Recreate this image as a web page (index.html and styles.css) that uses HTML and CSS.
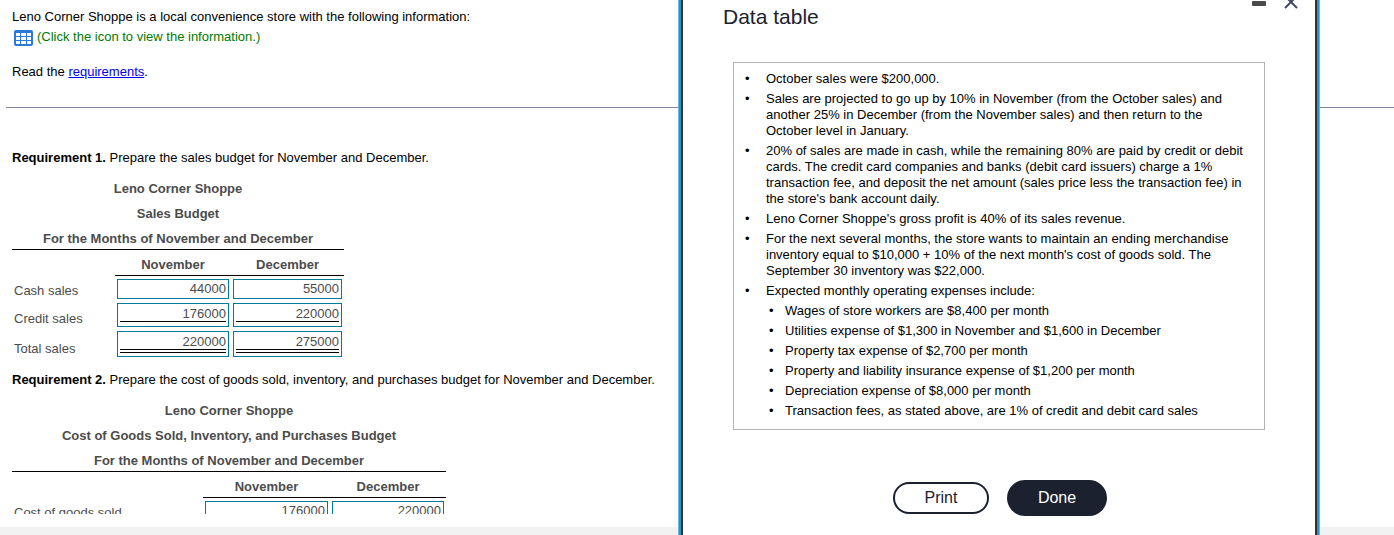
FILE: index.html
```html
<!DOCTYPE html>
<html lang="en">
<head>
  <meta charset="UTF-8">
  <meta name="viewport" content="width=device-width, initial-scale=1.0">
  <title>Leno Corner Shoppe</title>
  <link rel="stylesheet" href="styles.css">
</head>
<body>
  <main class="question">
    <div class="scroll">
      <section class="intro">
        <p>Leno Corner Shoppe is a local convenience store with the following information:</p>
        <p class="hint">
          <svg class="table-icon" width="19" height="16" viewBox="0 0 19 16" aria-hidden="true">
            <rect x="0" y="0" width="19" height="16" rx="2" fill="#2b78d8"/>
            <g fill="#fff">
              <rect x="2" y="3" width="4" height="3"/>
              <rect x="7" y="3" width="5" height="3"/>
              <rect x="13" y="3" width="4" height="3"/>
              <rect x="2" y="7" width="4" height="3"/>
              <rect x="7" y="7" width="5" height="3"/>
              <rect x="13" y="7" width="4" height="3"/>
              <rect x="2" y="11" width="4" height="3"/>
              <rect x="7" y="11" width="5" height="3"/>
              <rect x="13" y="11" width="4" height="3"/>
            </g>
          </svg>
          <span>(Click the icon to view the information.)</span>
        </p>
        <p class="read">Read the <a href="#requirements">requirements</a>.</p>
      </section>
      <hr class="divider">
      <section class="answers" id="requirements">
        <p><b>Requirement 1.</b> Prepare the sales budget for November and December.</p>
        <table class="budget">
          <colgroup>
            <col class="col-103">
            <col class="col-116">
            <col class="col-113">
          </colgroup>
          <thead>
            <tr class="title"><th colspan="3">Leno Corner Shoppe</th></tr>
            <tr class="title"><th colspan="3">Sales Budget</th></tr>
            <tr class="title ruled"><th colspan="3">For the Months of November and December</th></tr>
            <tr class="months">
              <td></td>
              <th>November</th>
              <th>December</th>
            </tr>
          </thead>
          <tbody>
            <tr>
              <th class="label">Cash sales</th>
              <td><div class="box"><input type="text" value="44000" aria-label="Cash sales, November"></div></td>
              <td><div class="box"><input type="text" value="55000" aria-label="Cash sales, December"></div></td>
            </tr>
            <tr>
              <th class="label">Credit sales</th>
              <td><div class="box subtotal"><input type="text" value="176000" aria-label="Credit sales, November"></div></td>
              <td><div class="box subtotal"><input type="text" value="220000" aria-label="Credit sales, December"></div></td>
            </tr>
            <tr>
              <th class="label">Total sales</th>
              <td><div class="box total"><input type="text" value="220000" aria-label="Total sales, November"></div></td>
              <td><div class="box total"><input type="text" value="275000" aria-label="Total sales, December"></div></td>
            </tr>
          </tbody>
        </table>
        <p><b>Requirement 2.</b> Prepare the cost of goods sold, inventory, and purchases budget for November and December.</p>
        <table class="budget">
          <colgroup>
            <col class="col-191">
            <col class="col-127">
            <col class="col-116">
          </colgroup>
          <thead>
            <tr class="title"><th colspan="3">Leno Corner Shoppe</th></tr>
            <tr class="title"><th colspan="3">Cost of Goods Sold, Inventory, and Purchases Budget</th></tr>
            <tr class="title ruled"><th colspan="3">For the Months of November and December</th></tr>
            <tr class="months">
              <td></td>
              <th>November</th>
              <th>December</th>
            </tr>
          </thead>
          <tbody>
            <tr>
              <th class="label">Cost of goods sold</th>
              <td><div class="box"><input type="text" value="176000" aria-label="Cost of goods sold, November"></div></td>
              <td><div class="box"><input type="text" value="220000" aria-label="Cost of goods sold, December"></div></td>
            </tr>
          </tbody>
        </table>
      </section>
    </div>
  </main>

  <div class="dialog" role="dialog" aria-labelledby="dialog-title">
    <header class="dialog-header">
      <h1 id="dialog-title">Data table</h1>
      <div class="window-buttons">
        <button type="button" aria-label="Minimize">
          <svg width="14" height="12" viewBox="0 0 14 12"><rect x="0" y="1" width="14" height="5" rx="1" fill="#4a4a4a"/></svg>
        </button>
        <button type="button" aria-label="Close">
          <svg width="14" height="12" viewBox="0 0 14 12"><path d="M1 -4L13 8M13 -4L1 8" stroke="#414a5c" stroke-width="2" fill="none"/></svg>
        </button>
      </div>
    </header>
    <div class="data">
      <ul class="facts">
        <li><span>October sales were $200,000.</span></li>
        <li><span>Sales are projected to go up by 10% in November (from the October sales) and another 25% in December (from the November sales) and then return to the October level in January.</span></li>
        <li><span>20% of sales are made in cash, while the remaining 80% are paid by credit or debit cards. The credit card companies and banks (debit card issuers) charge a 1% transaction fee, and deposit the net amount (sales price less the transaction fee) in the store's bank account daily.</span></li>
        <li><span>Leno Corner Shoppe's gross profit is 40% of its sales revenue.</span></li>
        <li><span>For the next several months, the store wants to maintain an ending merchandise inventory equal to $10,000 + 10% of the next month's cost of goods sold. The September 30 inventory was $22,000.</span></li>
        <li>
          <div>
            Expected monthly operating expenses include:
            <ul class="expenses">
              <li>Wages of store workers are $8,400 per month</li>
              <li>Utilities expense of $1,300 in November and $1,600 in December</li>
              <li>Property tax expense of $2,700 per month</li>
              <li>Property and liability insurance expense of $1,200 per month</li>
              <li>Depreciation expense of $8,000 per month</li>
              <li>Transaction fees, as stated above, are 1% of credit and debit card sales</li>
            </ul>
          </div>
        </li>
      </ul>
    </div>
    <footer class="dialog-footer">
      <button type="button" class="print">Print</button>
      <button type="button" class="done">Done</button>
    </footer>
  </div>
</body>
</html>
```
FILE: styles.css
```css
* {
  box-sizing: border-box;
}
body {
  margin: 0;
  height: 100vh;
  padding-bottom: 8px;
  overflow: hidden;
  background-color: #f2f2f2;
  color: #000;
  font-family: "Liberation Sans", Arial, sans-serif;
  font-size: 13px;
  line-height: 16px;
}
p, ul, h1 {
  margin: 0;
  padding: 0;
}
a {
  color: #0000ee;
}

/* question page */
.question {
  height: 100%;
  padding-bottom: 13px;
  background-color: #fff;
}
.scroll {
  height: 100%;
  overflow: hidden;
}
.intro {
  padding: 9px 12px 27px;
}
.hint {
  display: flex;
  gap: 4px;
  margin-top: 4px;
  padding-left: 2px;
  color: #007a00;
}
.table-icon {
  margin-top: 1px;
}
.read {
  margin-top: 18px;
}
.divider {
  margin: 0 0 0 6px;
  border: 0;
  border-top: 1px solid #8085a2;
}
.answers {
  padding: 42px 12px 0;
}

/* budget tables */
.budget {
  margin: 10px 0 14px;
  border-collapse: separate;
  border-spacing: 0;
  table-layout: fixed;
  width: min-content;
  color: #4c4c4c;
}
.budget th,
.budget td {
  padding: 3px 2px 1px;
}
.col-103 {
  width: 103px;
}
.col-113 {
  width: 113px;
}
.col-116 {
  width: 116px;
}
.col-127 {
  width: 127px;
}
.col-191 {
  width: 191px;
}
.budget .title th {
  height: 25px;
  padding: 0;
  white-space: nowrap;
}
.budget .ruled th {
  height: 24px;
  padding-top: 2px;
  border-bottom: 1px solid #000;
}
.budget .months th {
  height: 26px;
  padding: 4px 0 0;
  border-bottom: 1px solid #000;
}
.budget .label {
  font-weight: normal;
  line-height: 17px;
  text-align: left;
  vertical-align: bottom;
  white-space: nowrap;
}
.box {
  padding: 1px 2px;
  border: 1px solid #007a99;
}
.box input {
  display: block;
  width: 100%;
  height: 16px;
  padding: 0;
  border: 0;
  outline: 0;
  background: none;
  color: inherit;
  font: inherit;
  text-align: right;
}
.subtotal {
  padding-bottom: 4px;
}
.subtotal input {
  height: 17px;
  border-bottom: 1px solid #000;
}
.total {
  padding-bottom: 3px;
}
.total input {
  height: 20px;
  border-bottom: 4px double #000;
}

/* data table dialog, lies over the question */
.dialog {
  position: absolute;
  top: 0;
  bottom: 0;
  right: 77px;
  width: 636px;
  border: solid #333;
  border-width: 0 2px;
  background-color: #fff;
  box-shadow: 0 0 0 2px #2692cb, 0 0 0 3px #6ab8e0;
}
.dialog-header {
  display: flex;
  justify-content: space-between;
  align-items: flex-start;
  padding: 0 17px 0 40px;
}
.dialog-header h1 {
  padding-top: 5px;
  color: #1c2130;
  font-size: 21px;
  font-weight: normal;
  line-height: 24px;
}
.window-buttons {
  display: flex;
  gap: 18px;
}
.window-buttons button {
  display: flex;
  padding: 0;
  border: 0;
  background: none;
}
.data {
  margin: 33px 50px 0;
  padding: 8px 14px 10px 11px;
  border: 1px solid #b4b4b4;
}
.facts,
.expenses {
  display: flex;
  flex-direction: column;
  gap: 4px;
  list-style: none;
}
.facts li {
  display: flex;
}
.facts li::before {
  content: "•";
  flex: none;
  width: 21px;
}
.expenses {
  margin: 4px 0 0 3px;
}
.expenses li::before {
  width: 16px;
}
.dialog-footer {
  display: flex;
  justify-content: center;
  align-items: center;
  gap: 18px;
  margin-top: 50px;
  padding-left: 2px;
}
.dialog-footer button {
  padding: 0;
  border: 2px solid #1c2130;
  border-radius: 18px;
  font-family: inherit;
  font-size: 16px;
}
.print {
  width: 96px;
  height: 32px;
  background-color: #fff;
  color: #1c2130;
}
.done {
  width: 100px;
  height: 36px;
  background-color: #1c2130;
  color: #fff;
}
```
